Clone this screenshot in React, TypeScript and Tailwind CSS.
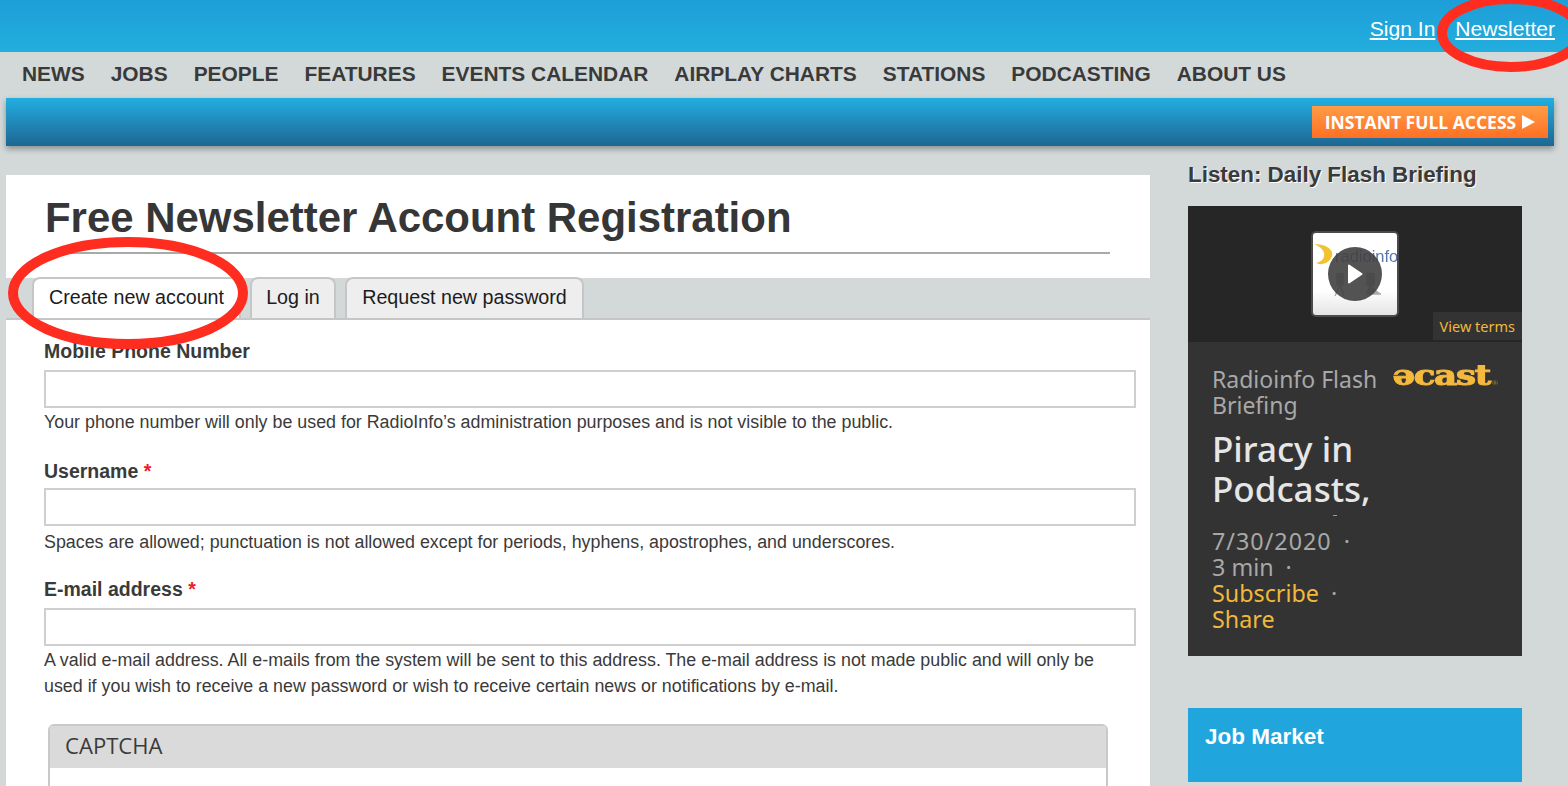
import React from "react";

const navItems = [
  "NEWS",
  "JOBS",
  "PEOPLE",
  "FEATURES",
  "EVENTS CALENDAR",
  "AIRPLAY CHARTS",
  "STATIONS",
  "PODCASTING",
  "ABOUT US",
];

function Field({
  label,
  required,
  help,
  className,
  inputClass,
  helpClass,
}: {
  label: string;
  required?: boolean;
  help: React.ReactNode;
  className?: string;
  inputClass: string;
  helpClass: string;
}) {
  return (
    <div className={className}>
      <label className="block text-[19.5px] leading-[22px] font-bold text-[#3a3a3a]">
        {label}
        {required && <span className="text-[#e8202a]"> *</span>}
      </label>
      <input className={`block w-[1092px] h-[38px] border-2 border-[#cfcfcf] bg-white ${inputClass}`} />
      <div className={`text-[17.85px] leading-[26px] text-[#3a3a3a] ${helpClass}`}>{help}</div>
    </div>
  );
}

function Tab({ text, width, active }: { text: string; width: string; active?: boolean }) {
  return (
    <div
      className={`h-[41px] text-center border-2 border-b-0 border-[#c6c6c6] rounded-t-[8px] text-[19.7px] leading-[37px] text-[#1c1c1c] ${width} ${
        active ? "bg-white" : "bg-[#eeeeee]"
      }`}
    >
      {text}
    </div>
  );
}

function RadioinfoThumb() {
  return (
    <div className="relative w-[88px] h-[86px] bg-gradient-to-b from-white from-70% to-[#e4e4e4] border-[2px] border-[#4a4a4a] rounded-[5px] overflow-hidden">
      <svg className="absolute left-0 top-[10px]" width="22" height="24" viewBox="0 0 22 24">
        <path d="M1 1 C 12 1 21 6 19 13 C 17 20 8 23 3 20 C 9 19 12 15 11 10 C 10 6 6 3 1 1 Z" fill="#f2c230" />
      </svg>
      <span className="absolute left-[22px] top-[14px] text-[16.5px] leading-[18px] text-[#5b78ad] blur-[0.4px]">
        radioinfo
      </span>
      {/* mics, blurred in the artwork */}
      <svg className="absolute left-[18px] top-[40px] blur-[0.6px] opacity-60" width="50" height="24" viewBox="0 0 50 24">
        <path d="M6 0 h6 v12 h-6 Z M9 12 L4 23 M9 12 L13 23" stroke="#777" strokeWidth="1.5" fill="#777" />
        <path d="M36 0 h7 v12 h-7 Z M39 12 L36 21 H50" stroke="#777" strokeWidth="1.5" fill="#777" />
      </svg>
      <div className="absolute left-[15px] top-[14px] w-[54px] h-[54px] rounded-full bg-[#404040]/90 flex items-center justify-center">
        <svg width="16" height="20" viewBox="0 0 16 20">
          <path d="M2 1.5 L14.5 10 L2 18.5 Z" fill="#fff" stroke="#fff" strokeLinejoin="round" strokeWidth="2" />
        </svg>
      </div>
    </div>
  );
}

export default function App() {
  return (
    <div className="relative h-[786px] overflow-hidden bg-[#d3d9d9] font-['Liberation_Sans',Arial,sans-serif]">
      {/* Top bar */}
      <div className="h-[52px] bg-gradient-to-b from-[#1e9ed8] to-[#22aede] flex justify-end items-start pt-[16px] pr-[13px] gap-[20px] text-[21.1px] leading-[26px] text-white">
        <a className="underline">Sign In</a>
        <a className="underline">Newsletter</a>
      </div>

      {/* Nav */}
      <nav className="h-[46px] pb-[2px] flex items-center pl-[22px] gap-[26px] text-[20.92px] font-bold text-[#3a3a3a]">
        {navItems.map((item) => (
          <span key={item}>{item}</span>
        ))}
      </nav>

      {/* Blue bar */}
      <div className="mx-[6px] w-[1548px] h-[48px] bg-gradient-to-b from-[#22aee2] to-[#1d6793] shadow-[0_3px_6px_rgba(0,0,0,0.35)] flex justify-end items-start pt-[8px] pr-[6px]">
        <div className="w-[236px] h-[32px] bg-gradient-to-b from-[#ff9c45] to-[#ff6f22] flex items-center justify-center gap-[6px] text-[17.5px] font-bold text-white font-['Open_Sans',sans-serif]">
          <span>INSTANT FULL ACCESS</span>
          <svg width="13" height="14" viewBox="0 0 13 14">
            <path d="M0 0 L13 7 L0 14 Z" fill="#fff" />
          </svg>
        </div>
      </div>

      <div className="flex items-start mt-[29px] pl-[6px]">
        {/* Main column */}
        <main className="w-[1144px] bg-white">
          <div className="h-[103px] px-[39px]">
            <div className="w-[1065px] h-[79px] border-b-2 border-[#a9a9a9]">
              <h1 className="pt-[17px] text-[41.95px] leading-[52px] font-bold text-[#363636]">
                Free Newsletter Account Registration
              </h1>
            </div>
          </div>

          <div className="h-[42px] bg-[#d3d9d9] border-b-2 border-[#c6c6c6] flex items-end pl-[26px] gap-[9px]">
            <Tab text="Create new account" width="w-[209px]" active />
            <Tab text="Log in" width="w-[86px]" />
            <Tab text="Request new password" width="w-[239px]" />
          </div>

          <div className="pl-[38px] pt-[20px] h-[466px]">
            <Field
              inputClass="mt-[8px]"
              helpClass="mt-[1px]"
              label="Mobile Phone Number"
              help="Your phone number will only be used for RadioInfo’s administration purposes and is not visible to the public."
            />
            <Field
              className="mt-[25px]"
              inputClass="mt-[6px]"
              helpClass="mt-[3px]"
              label="Username"
              required
              help="Spaces are allowed; punctuation is not allowed except for periods, hyphens, apostrophes, and underscores."
            />
            <Field
              className="mt-[23px]"
              inputClass="mt-[8px]"
              helpClass="mt-[1px]"
              label="E-mail address"
              required
              help={
                <>
                  A valid e-mail address. All e-mails from the system will be sent to this address. The e-mail address is not made public and will only be
                  <br />
                  used if you wish to receive a new password or wish to receive certain news or notifications by e-mail.
                </>
              }
            />
            <div className="mt-[25px] ml-[4px] w-[1060px] h-[100px] border-2 border-[#c9c9c9] rounded-t-[6px]">
              <div className="h-[42px] bg-[#dadada] pl-[15px] text-[22.1px] leading-[39px] text-[#3a3a3a] font-['Open_Sans',sans-serif]">
                CAPTCHA
              </div>
            </div>
          </div>
        </main>

        {/* Sidebar */}
        <aside className="ml-[38px] w-[334px]">
          <h2 className="h-[31px] -mt-[13px] text-[22.4px] leading-[26px] font-bold text-[#3a3a3a] [text-shadow:1px_1px_0_#fff]">
            Listen: Daily Flash Briefing
          </h2>
          <div className="mt-[13px] h-[450px] bg-[#333333]">
            <div className="relative h-[136px] bg-[#262626] flex justify-center pt-[25px]">
              <RadioinfoThumb />
              <div className="absolute right-0 top-[106px] h-[28px] px-[7px] bg-[#333333] text-[14.5px] leading-[28px] text-[#f0b93c] font-['Noto_Sans',sans-serif]">
                View terms
              </div>
            </div>
            <div className="pl-[24px] pr-[25px] pt-[24px] font-['Noto_Sans',sans-serif]">
              <div className="flex items-start justify-between">
                <div className="w-[175px] text-[23px] leading-[26px] text-[#a8a8a8]">Radioinfo Flash Briefing</div>
                <div className="relative origin-right scale-x-[1.32] font-['DejaVu_Serif',serif] font-bold text-[27px] leading-[26px] text-[#f5b93d] -mt-[3px] mr-[7px] tracking-[-1px] [-webkit-text-stroke:1px_#f5b93d]">
                  əcast
                  <span className="absolute left-full bottom-[3px] ml-[1px] text-[6px] leading-[6px] font-normal [-webkit-text-stroke:0px] text-[#a8842f]">®</span>
                </div>
              </div>
              <div className="mt-[10.5px] text-[35px] font-medium leading-[40px] text-[#e6e6e6]">
                Piracy in
                <br />
                Podcasts,
              </div>
              <div className="mt-[6.5px] ml-[121px] w-[4px] h-[1px] bg-[#9a9a9a]" />
              <div className="mt-[12px] text-[23.3px] leading-[26px] text-[#a8a8a8]">
                <div>
                  <span className="tracking-[1px]">7/30/2020</span>
                  <span className="ml-[12px]">·</span>
                </div>
                <div>
                  3 min<span className="ml-[12px]">·</span>
                </div>
                <div>
                  <span className="text-[#f0b93c]">Subscribe</span>
                  <span className="ml-[12px]">·</span>
                </div>
                <div className="text-[#f0b93c]">Share</div>
              </div>
            </div>
          </div>
          <div className="mt-[52px] h-[74px] bg-[#20a5dd] pl-[17px] pt-[16px] text-[22.5px] leading-[26px] font-bold text-white">
            Job Market
          </div>
        </aside>
      </div>

      {/* Red annotation circles */}
      <svg className="absolute left-0 top-0 pointer-events-none" width="1568" height="786" viewBox="0 0 1568 786">
        <ellipse cx="128" cy="293" rx="115" ry="51" fill="none" stroke="#ff2d20" strokeWidth="10" />
        <ellipse cx="1511" cy="33" rx="69" ry="34" fill="none" stroke="#ff2d20" strokeWidth="10" />
      </svg>
    </div>
  );
}
